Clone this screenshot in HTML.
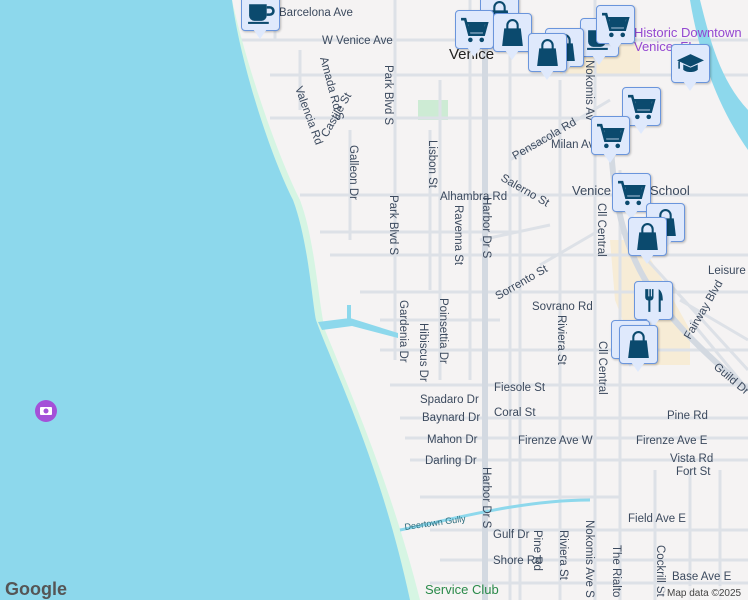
<!DOCTYPE html>
<html><head><meta charset="utf-8"><style>
html,body{margin:0;padding:0;width:748px;height:600px;overflow:hidden;background:#f5f3f3;font-family:"Liberation Sans",sans-serif}
.m{position:absolute;width:37px;height:37px;background:#dfe9fc;border:1.5px solid #6a95dc;border-radius:4px;box-shadow:1px 1px 2px rgba(0,0,0,.25)}
.m:after{content:"";position:absolute;left:11px;top:36px;border-left:7px solid transparent;border-right:7px solid transparent;border-top:10px solid #dfe9fc}
.m svg{position:absolute;left:4px;top:4px;width:29px;height:29px}
</style></head><body>
<svg width="748" height="600" style="position:absolute;left:0;top:0" font-family="Liberation Sans, sans-serif">
<defs>
<symbol id="cart" viewBox="0 0 28 28"><path d="M1 4h4l4 15h14l3-11H7" fill="none" stroke="#0b4a6e" stroke-width="2.5"/><rect x="8" y="9" width="16" height="8" fill="#0b4a6e"/><circle cx="10" cy="24" r="2.2" fill="#0b4a6e"/><circle cx="21" cy="24" r="2.2" fill="#0b4a6e"/></symbol>
<symbol id="bag" viewBox="0 0 28 28"><path d="M6 10h16l2 17H4z" fill="#0b4a6e"/><path d="M9 11V7a5 5 0 0 1 10 0v4" fill="none" stroke="#0b4a6e" stroke-width="2"/></symbol>
<symbol id="cup" viewBox="0 0 28 28"><path d="M3 7h17v11a5 5 0 0 1-5 5H8a5 5 0 0 1-5-5z" fill="#0b4a6e"/><path d="M20 10h3a3 3 0 0 1 0 7h-3" fill="none" stroke="#0b4a6e" stroke-width="2.5"/><rect x="2" y="24" width="20" height="2" fill="#0b4a6e"/></symbol>
<symbol id="fork" viewBox="0 0 28 28"><path d="M6 3v8a3 3 0 0 0 3 3v11h2V14a3 3 0 0 0 3-3V3h-1.5v7h-1V3h-1.5v7h-1V3z" fill="#0b4a6e"/><path d="M19 3c3 2 4 6 4 11h-2v11h-2z" fill="#0b4a6e"/></symbol>
<symbol id="grad" viewBox="0 0 28 28"><path d="M1 11l13-6 13 6-13 6z" fill="#0b4a6e"/><path d="M7 15v5c3 3 11 3 14 0v-5l-7 3z" fill="#0b4a6e"/><path d="M3 12v7" stroke="#0b4a6e" stroke-width="1.5"/></symbol>
</defs>
<path d="M560 45 L640 45 L640 75 L560 75Z" fill="#f7ecd6"/>
<path d="M610 240 L640 240 L690 330 L690 365 L640 365 L615 300Z" fill="#f7ecd6"/>
<rect x="418" y="100" width="30" height="20" fill="#cdebd4"/>
<g stroke="#dde1e7" stroke-width="3" fill="none">
<path d="M240 40H748M270 75H748M270 118H600M300 195H748M320 232H520M330 255H748M360 292H748M380 320H500M380 350H748M390 385H748M400 418H748M405 438H748M410 460H748M420 497H620M430 530H748M440 560H748M430 583H748"/>
<path d="M395 0V360M440 80V380M470 0V380M510 0V600M520 150V600M560 80V600M595 0V600M620 170V600M655 470V600M690 470V600M720 470V600M275 0V40M300 50V110M350 130V240M395 110V300M430 130V290"/>
<path d="M510 160L610 100M480 240L550 225M620 230L748 370M690 320L748 390M680 300L748 340M540 265L600 230"/>
</g>
<path d="M485 0V600" stroke="#d3d9e1" stroke-width="6"/>
<path d="M610 130C615 250 640 300 748 390" stroke="#d3d9e1" stroke-width="6" fill="none"/>
<path d="M700 0C710 40 720 80 748 110L748 150C720 110 700 60 690 0Z" fill="#8dd8ec"/>
<path d="M232 0 C245 60 275 150 300 200 C315 240 318 300 325 330 C345 380 390 480 420 600 L0 600 L0 0Z" fill="#d6f5e3"/>
<path d="M232 0 C240 60 268 150 293 200 C308 240 312 300 316 320 C330 360 380 460 410 600 L0 600 L0 0Z" fill="#8dd8ec"/>
<path d="M318 322 L350 318 L398 333 L398 338 L352 326 L322 330Z M347 305 h4 v18 h-4z" fill="#8dd8ec"/>
<path d="M400 530 C450 520 520 500 590 500" stroke="#8dd8ec" stroke-width="3" fill="none"/>
<circle cx="46" cy="411" r="11" fill="#a451d8"/><rect x="40" y="407" width="12" height="8" rx="1" fill="#fff"/><circle cx="46" cy="411" r="2.5" fill="#a451d8"/>
<g font-size="11.5" fill="#3c4a5e">
<text x="279" y="16">Barcelona Ave</text>
<text x="322" y="44">W Venice Ave</text>
<text x="449" y="59" font-size="15" fill="#222">Venice</text>
<text x="634" y="37" font-size="13" fill="#9448d1">Historic Downtown</text>
<text x="634" y="51" font-size="13" fill="#9448d1">Venice, FL</text>
<text x="440" y="200">Alhambra Rd</text>
<text x="515" y="160" transform="rotate(-30 515 160)">Pensacola Rd</text>
<text x="551" y="148">Milan Av</text>
<text x="572" y="195" font-size="13">Venice</text><text x="650" y="195" font-size="13">School</text>
<text x="708" y="274">Leisure</text>
<text x="532" y="310">Sovrano Rd</text>
<text x="494" y="391">Fiesole St</text>
<text x="420" y="403">Spadaro Dr</text>
<text x="422" y="421">Baynard Dr</text>
<text x="494" y="416">Coral St</text>
<text x="667" y="419">Pine Rd</text>
<text x="427" y="443">Mahon Dr</text>
<text x="518" y="444">Firenze Ave W</text>
<text x="636" y="444">Firenze Ave E</text>
<text x="425" y="464">Darling Dr</text>
<text x="670" y="462">Vista Rd</text>
<text x="676" y="475">Fort St</text>
<text x="628" y="522">Field Ave E</text>
<text x="493" y="538">Gulf Dr</text>
<text x="493" y="564">Shore Rd</text>
<text x="672" y="580">Base Ave E</text>
<text x="425" y="594" font-size="13" fill="#2a8a4a">Service Club</text>
<text x="405" y="530" font-size="9" fill="#2a6a7a" transform="rotate(-8 405 530)">Deertown Gully</text>
<text x="490" y="190" transform="rotate(90 483 190)">Harbor Dr S</text>
<text x="490" y="460" transform="rotate(90 483 460)">Harbor Dr S</text>
<text x="320" y="58" transform="rotate(75 320 58)">Amada Rd S</text>
<text x="295" y="88" transform="rotate(70 295 88)">Valencia Rd</text>
<text x="327" y="138" transform="rotate(-60 327 138)">Castile St</text>
<text x="355" y="140" transform="rotate(90 350 140)">Galleon Dr</text>
<text x="390" y="60" transform="rotate(90 385 60)">Park Blvd S</text>
<text x="395" y="190" transform="rotate(90 390 190)">Park Blvd S</text>
<text x="434" y="135" transform="rotate(90 429 135)">Lisbon St</text>
<text x="460" y="200" transform="rotate(90 455 200)">Ravenna St</text>
<text x="405" y="295" transform="rotate(90 400 295)">Gardenia Dr</text>
<text x="445" y="293" transform="rotate(90 440 293)">Poinsettia Dr</text>
<text x="425" y="318" transform="rotate(90 420 318)">Hibiscus Dr</text>
<text x="498" y="300" transform="rotate(-30 498 300)">Sorrento St</text>
<text x="500" y="180" transform="rotate(30 500 180)">Salerno St</text>
<text x="563" y="310" transform="rotate(90 558 310)">Riviera St</text>
<text x="604" y="336" transform="rotate(90 599 336)">Cll Central</text>
<text x="603" y="198" transform="rotate(90 598 198)">Cll Central</text>
<text x="591" y="55" transform="rotate(90 586 55)">Nokomis Av</text>
<text x="591" y="515" transform="rotate(90 586 515)">Nokomis Ave S</text>
<text x="618" y="540" transform="rotate(90 613 540)">The Rialto</text>
<text x="662" y="540" transform="rotate(90 657 540)">Cockrill St</text>
<text x="539" y="525" transform="rotate(90 534 525)">Pine Rd</text>
<text x="565" y="525" transform="rotate(90 560 525)">Riviera St</text>
<text x="690" y="340" transform="rotate(-60 690 340)">Fairway Blvd</text>
<text x="713" y="368" transform="rotate(40 713 368)">Guild Dr</text>
</g>
<text x="5" y="595" font-size="18" fill="#555" font-weight="bold">Google</text>
<rect x="664" y="586" width="84" height="14" fill="#f5f3f3" opacity=".7"/>
<text x="667" y="596" font-size="10" fill="#444">Map data ©2025</text>
</svg>
<div class="m" style="left:241px;top:-8px"><svg><use href="#cup"/></svg></div>
<div class="m" style="left:480px;top:-5px"><svg><use href="#bag"/></svg></div>
<div class="m" style="left:455px;top:10px"><svg><use href="#cart"/></svg></div>
<div class="m" style="left:493px;top:13px"><svg><use href="#bag"/></svg></div>
<div class="m" style="left:580px;top:18px"><svg><use href="#cup"/></svg></div>
<div class="m" style="left:545px;top:28px"><svg><use href="#bag"/></svg></div>
<div class="m" style="left:528px;top:33px"><svg><use href="#bag"/></svg></div>
<div class="m" style="left:596px;top:5px"><svg><use href="#cart"/></svg></div>
<div class="m" style="left:671px;top:44px"><svg><use href="#grad"/></svg></div>
<div class="m" style="left:622px;top:87px"><svg><use href="#cart"/></svg></div>
<div class="m" style="left:591px;top:116px"><svg><use href="#cart"/></svg></div>
<div class="m" style="left:612px;top:173px"><svg><use href="#cart"/></svg></div>
<div class="m" style="left:646px;top:203px"><svg><use href="#bag"/></svg></div>
<div class="m" style="left:628px;top:217px"><svg><use href="#bag"/></svg></div>
<div class="m" style="left:634px;top:281px"><svg><use href="#fork"/></svg></div>
<div class="m" style="left:611px;top:320px"><svg><use href="#bag"/></svg></div>
<div class="m" style="left:619px;top:325px"><svg><use href="#bag"/></svg></div>
</body></html>
